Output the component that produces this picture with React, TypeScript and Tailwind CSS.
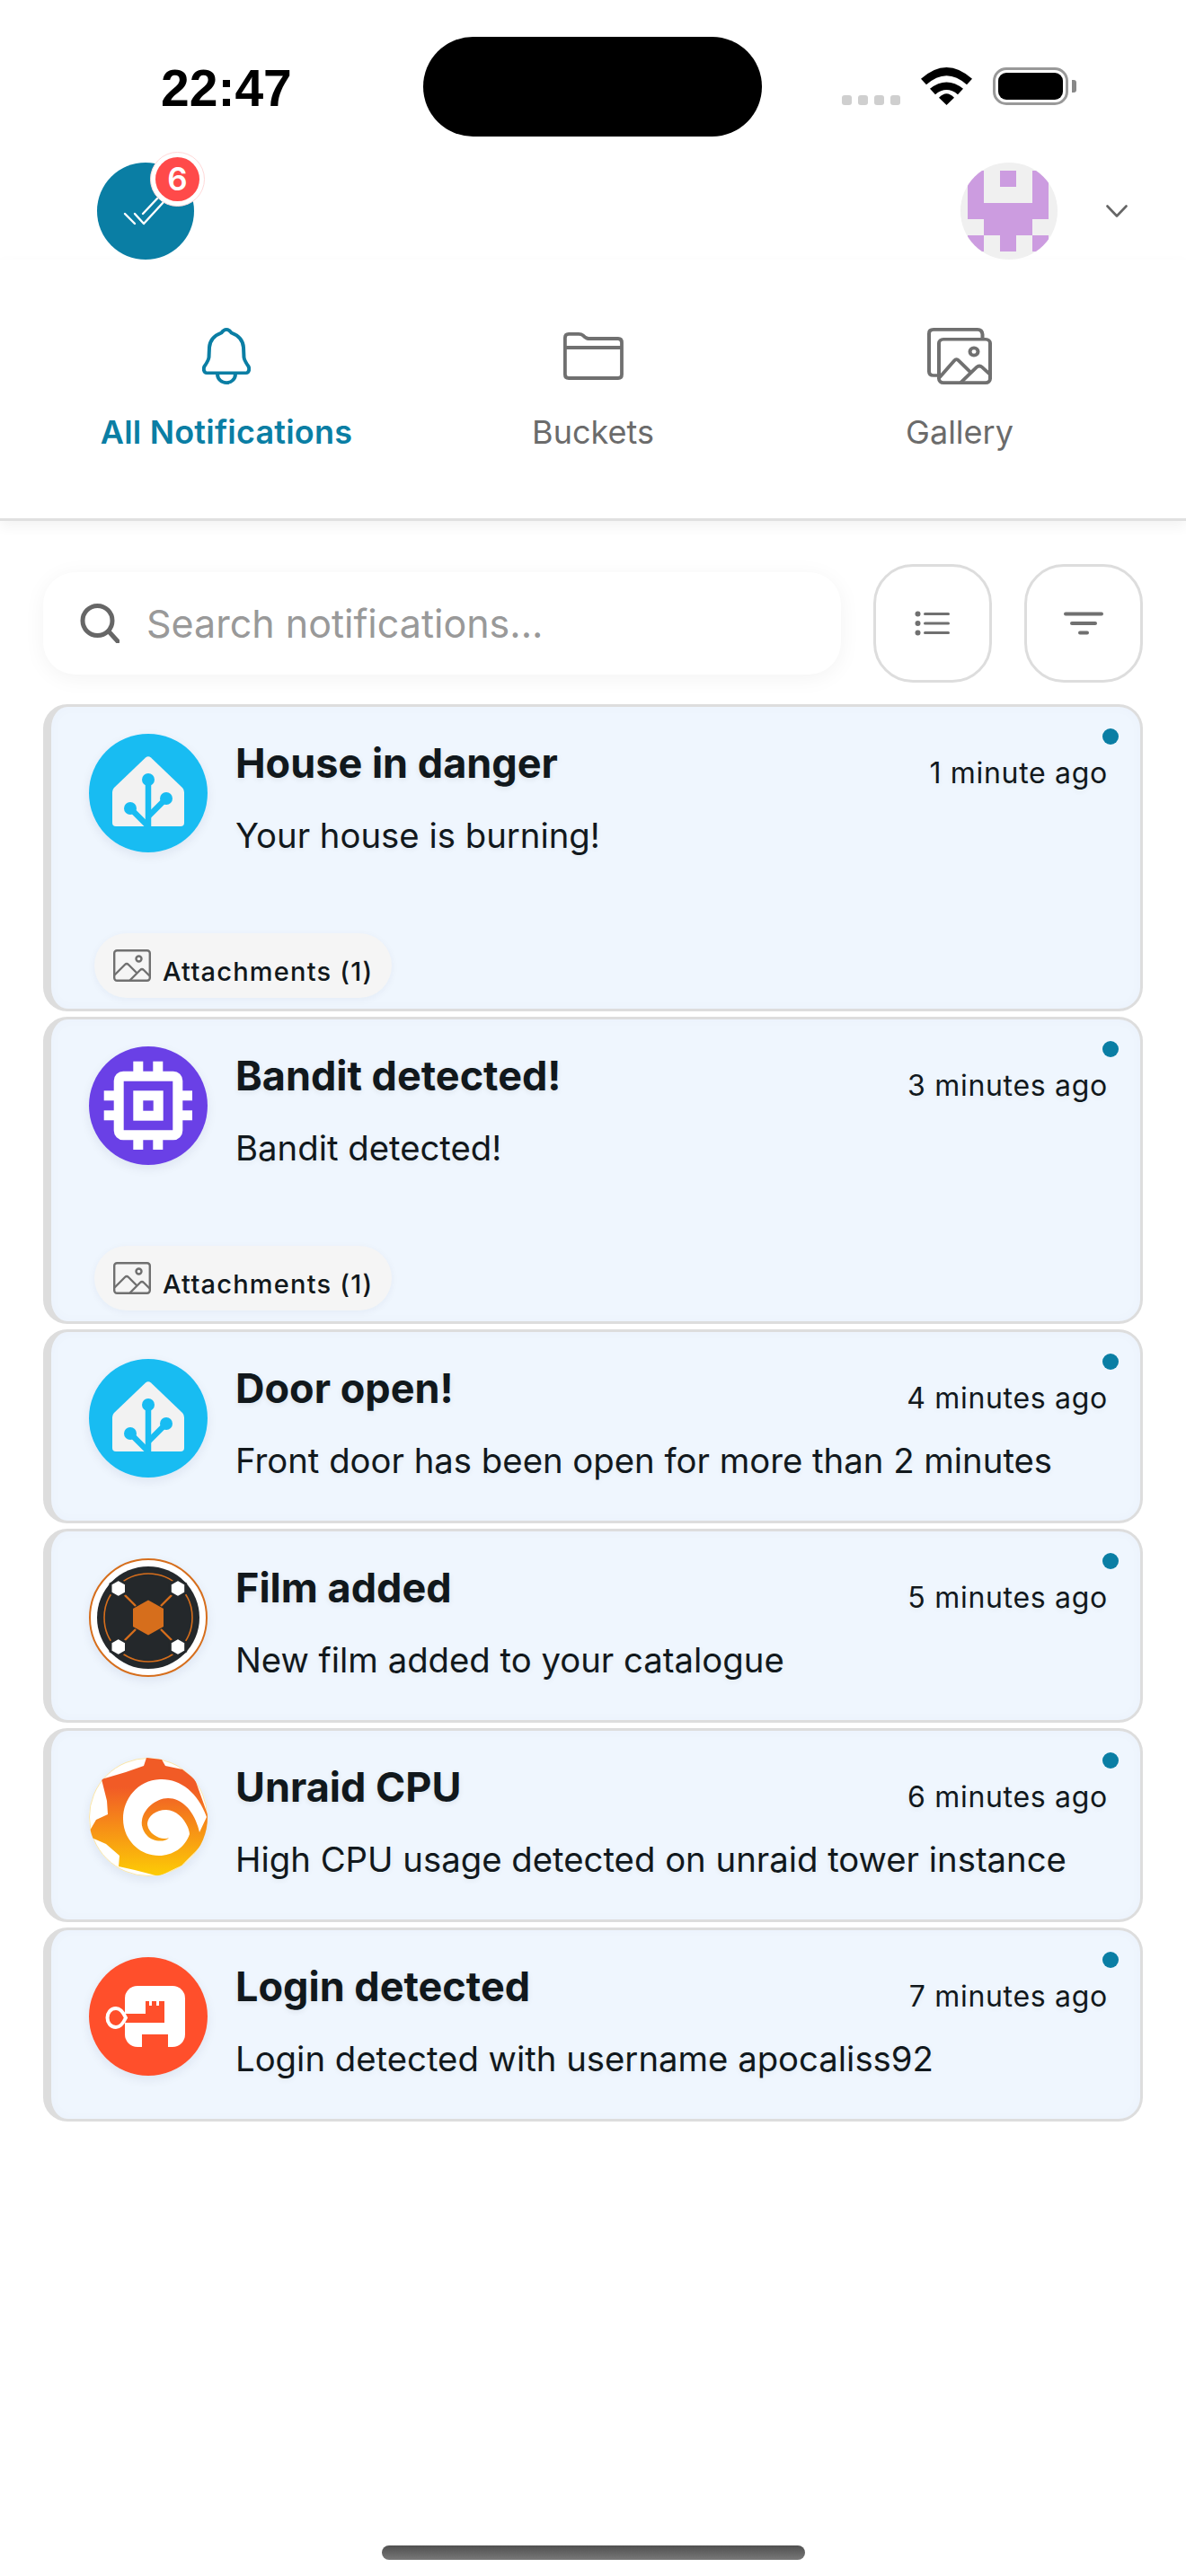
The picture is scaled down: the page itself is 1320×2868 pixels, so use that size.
const notifications = [
  { title: "House in danger", body: "Your house is burning!", time: "1 minute ago", icon: "home", attachments: true },
  { title: "Bandit detected!", body: "Bandit detected!", time: "3 minutes ago", icon: "chip", attachments: true },
  { title: "Door open!", body: "Front door has been open for more than 2 minutes", time: "4 minutes ago", icon: "home", attachments: false },
  { title: "Film added", body: "New film added to your catalogue", time: "5 minutes ago", icon: "film", attachments: false },
  { title: "Unraid CPU", body: "High CPU usage detected on unraid tower instance", time: "6 minutes ago", icon: "grafana", attachments: false },
  { title: "Login detected", body: "Login detected with username apocaliss92", time: "7 minutes ago", icon: "key", attachments: false },
];

const avatarCells = [
  [1, 0, 1, 0, 1],
  [1, 0, 0, 0, 1],
  [1, 1, 1, 1, 1],
  [0, 1, 1, 1, 0],
  [1, 0, 1, 0, 1],
];

const WifiIcon = () => (
  <svg width="57" height="42" viewBox="0 0 57 46" preserveAspectRatio="none" fill="#000">
    <path d="M0 14 Q28.5 -14 57 14 L51 21 Q28.5 -1 6 21 Z" />
    <path d="M10 26 Q28.5 10 47 26 L41 33 Q28.5 22 16 33 Z" />
    <path d="M20 37 Q28.5 27 37 37 L28.5 46 Z" />
  </svg>
);

const LogoCheck = () => (
  <svg width="108" height="108" viewBox="0 0 108 108" fill="none" stroke="#fff" strokeWidth="2.4" strokeLinecap="round" strokeLinejoin="round">
    <path d="M31 57 L42 68" />
    <path d="M42 57 L52 68 L74 44" />
    <path d="M51 57 L67 40" />
  </svg>
);

const BellIcon = () => (
  <svg width="54" height="63" viewBox="0 0 54 69" preserveAspectRatio="none" fill="none" stroke="#0a7ea4" strokeWidth="4" strokeLinecap="round" strokeLinejoin="round">
    <path d="M27 2 C24.5 2 23 3.5 21.5 6 C13 9.5 8.5 15 8 24 L7.5 36 C7 40 5 43 2.5 47 C1 50 2 55 5 55 L49 55 C52 55 53 50 51.5 47 C49 43 47 40 46.5 36 L46 24 C45.5 15 41 9.5 32.5 6 C31 3.5 29.5 2 27 2 Z" />
    <path d="M17 56 C17 63 22 67 27 67 C32 67 37 63 37 56" />
  </svg>
);

const FolderIcon = () => (
  <svg width="67" height="53" viewBox="0 0 67 53" fill="none" stroke="#707070" strokeWidth="3.8" strokeLinejoin="round">
    <path d="M1.9 6 Q1.9 1.9 6 1.9 L17 1.9 Q20 1.9 22 3.5 Q25 7 28 7 L61 7 Q65 7 65 11.5 L65 47 Q65 51 61 51 L6 51 Q1.9 51 1.9 47 Z" />
    <path d="M1.9 17 L65 17" />
  </svg>
);

const GalleryIcon = () => (
  <svg width="72" height="63" viewBox="0 0 72 69" preserveAspectRatio="none" fill="none" stroke="#707070" strokeWidth="4" strokeLinecap="round" strokeLinejoin="round">
    <path d="M12 58 L7 58 Q2 58 2 53 L2 7 Q2 2 7 2 L56 2 Q61 2 61.5 8 L61.5 13" />
    <rect x="13" y="14" width="57" height="53" rx="5" />
    <circle cx="52" cy="29" r="4.5" />
    <path d="M14 60 L30 40 Q32.5 37 35 40 L48 54" />
    <path d="M38 66 L55 48 Q58 45 61 48 L70 57" />
  </svg>
);

const SearchIcon = () => (
  <svg width="44" height="44" viewBox="0 0 44 44" fill="none" stroke="#666" strokeWidth="5" strokeLinecap="round">
    <circle cx="19.5" cy="19" r="16.5" />
    <path d="M32 31 L42 42" />
  </svg>
);

const ListIcon = () => (
  <svg width="40" height="28" viewBox="0 0 40 28" fill="#707070">
    <circle cx="3.5" cy="3.5" r="3" />
    <circle cx="3.5" cy="14" r="3" />
    <circle cx="3.5" cy="24.5" r="3" />
    <rect x="10" y="2" width="29" height="3" rx="1.5" />
    <rect x="10" y="12.5" width="29" height="3" rx="1.5" />
    <rect x="10" y="23" width="29" height="3" rx="1.5" />
  </svg>
);

const FilterIcon = () => (
  <svg width="44" height="28" viewBox="0 0 44 28" fill="#707070">
    <rect x="0" y="1.5" width="44" height="4" rx="2" />
    <rect x="7" y="12" width="30" height="4" rx="2" />
    <rect x="16" y="22.5" width="12" height="4" rx="2" />
  </svg>
);

const PictureIcon = () => (
  <svg width="42" height="36" viewBox="0 0 42 36" fill="none" stroke="#707070" strokeWidth="2.4" strokeLinecap="round" strokeLinejoin="round">
    <rect x="1.2" y="1.2" width="39.6" height="33.6" rx="3" />
    <circle cx="28.5" cy="10.5" r="3" />
    <path d="M2 28 L13 17 Q15 15 17 17 L26 26" />
    <path d="M19 34 L30 23 Q32 21 34 23 L40 29" />
  </svg>
);

const HomeAvatar = () => (
  <svg width="132" height="132" viewBox="0 0 132 132">
    <circle cx="66" cy="66" r="66" fill="#18bcf2" />
    <path d="M63 26.5 Q66 24 69 26.5 L104 60 Q106 62 106 65 L106 99 Q106 103 102 103 L30 103 Q26 103 26 99 L26 65 Q26 62 28 60 Z" fill="#f2f2f2" />
    <g stroke="#18bcf2" strokeWidth="6.5" fill="none">
      <path d="M66 51 L66 104" />
      <path d="M86 72 L66 92" />
      <path d="M46 83 L66 103" />
    </g>
    <g fill="#18bcf2">
      <circle cx="66" cy="51" r="7" />
      <circle cx="86" cy="72" r="7" />
      <circle cx="46" cy="83" r="7" />
    </g>
  </svg>
);

const ChipAvatar = () => (
  <svg width="132" height="132" viewBox="0 0 132 132">
    <circle cx="66" cy="66" r="66" fill="#6a40e6" />
    <rect x="33.2" y="33.2" width="65.6" height="65.6" rx="5" fill="none" stroke="#fff" strokeWidth="11" />
    <rect x="54.8" y="54.8" width="22.4" height="22.4" fill="none" stroke="#fff" strokeWidth="11" />
    <g fill="#fff">
      <rect x="49.3" y="16.7" width="11" height="12" />
      <rect x="71.3" y="16.7" width="11" height="12" />
      <rect x="49.3" y="103" width="11" height="12" />
      <rect x="71.3" y="103" width="11" height="12" />
      <rect x="16.7" y="49.3" width="12" height="11" />
      <rect x="16.7" y="71.3" width="12" height="11" />
      <rect x="103" y="49.3" width="12" height="11" />
      <rect x="103" y="71.3" width="12" height="11" />
    </g>
  </svg>
);

const FilmAvatar = () => (
  <svg width="132" height="132" viewBox="0 0 132 132">
    <circle cx="66" cy="66" r="65" fill="#fff" stroke="#d66e1c" strokeWidth="2" />
    <circle cx="66" cy="66" r="57" fill="#24282b" />
    <circle cx="66" cy="66" r="49" fill="none" stroke="#d66e1c" strokeWidth="1.6" />
    <g stroke="#d66e1c" strokeWidth="2.4">
      <path d="M39 40 L52 53" />
      <path d="M93 40 L80 53" />
      <path d="M39 92 L52 79" />
      <path d="M93 92 L80 79" />
    </g>
    <path d="M66 46.5 L83 56 L83 76 L66 85.5 L49 76 L49 56 Z" fill="#d66e1c" />
    <g fill="#fff" stroke="#24282b" strokeWidth="3">
      <path d="M32.7 23.5 L41.5 28.5 L41.5 38.5 L32.7 43.5 L24 38.5 L24 28.5 Z" />
      <path d="M99 23.5 L107.7 28.5 L107.7 38.5 L99 43.5 L90.3 38.5 L90.3 28.5 Z" />
      <path d="M32.7 88.5 L41.5 93.5 L41.5 103.5 L32.7 108.5 L24 103.5 L24 93.5 Z" />
      <path d="M99 88.5 L107.7 93.5 L107.7 103.5 L99 108.5 L90.3 103.5 L90.3 93.5 Z" />
    </g>
  </svg>
);

const GrafanaAvatar = () => (
  <svg width="132" height="132" viewBox="0 0 132 132">
    <defs>
      <linearGradient id="grafana-fill" x1="0" y1="0.25" x2="0" y2="1">
        <stop offset="0" stopColor="#f15b26" />
        <stop offset="1" stopColor="#fdcd05" />
      </linearGradient>
      <clipPath id="grafana-clip">
        <circle cx="66" cy="66" r="66" />
      </clipPath>
    </defs>
    <circle cx="66" cy="66" r="65.5" fill="#fff" stroke="#fbe6a8" strokeWidth="1" />
    <g clipPath="url(#grafana-clip)">
      <path
        d="M64 0 L81 2 L85 9 L104 13 L118 24 L132 63 L132 89 L118 105 L103 120 L78 132 L51 125 L33 121 L34 109 L19 96 L3 89 L1 81 L8 69 L21 63 L20 48 L14 24 L41 16 L61 9 Z"
        fill="url(#grafana-fill)"
      />
      <path
        d="M131 66 C121 38 101 23 79 24 C54 25 38 46 38 68 C38 91 56 109 78 109 C93 109 107 100 112 85 C111 74 100 58 86 58 C74 58 66 65 65 73 C65 83 76 90 84 90 C86 90 87 90 89 89 C84 95 70 93 65 87 C60 82 58 75 59 70 C60 58 74 45 88 45 C104 45 118 60 123 83 L131 66 Z"
        fill="#fff"
      />
    </g>
  </svg>
);

const KeyAvatar = () => (
  <svg width="132" height="132" viewBox="0 0 132 132">
    <circle cx="66" cy="66" r="66" fill="#ff4f2b" />
    <rect x="40" y="32" width="67" height="68" rx="14" fill="#fff" />
    <rect x="59" y="86" width="29" height="15" fill="#ff4f2b" />
    <rect x="38" y="63" width="46" height="10" fill="#ff4f2b" />
    <rect x="63" y="49" width="21" height="24" fill="#ff4f2b" />
    <rect x="67" y="49" width="3" height="5" fill="#fff" />
    <rect x="75" y="49" width="3" height="5" fill="#fff" />
    <path d="M30 57 C34 57 38 61 41 67.5 C38 74 34 78 30 78 C24 78 20.5 73 20.5 67.5 C20.5 62 24 57 30 57 Z" fill="#ff4f2b" stroke="#fff" strokeWidth="4" />
  </svg>
);

const NotificationAvatar = ({ icon }: { icon: string }) => {
  if (icon === "chip") return <ChipAvatar />;
  if (icon === "film") return <FilmAvatar />;
  if (icon === "grafana") return <GrafanaAvatar />;
  if (icon === "key") return <KeyAvatar />;
  return <HomeAvatar />;
};

const App = () => {
  return (
    <div className="relative w-[1320px] h-[2868px] bg-white font-['Inter',sans-serif] text-[#11181c] overflow-hidden">
      {/* status bar */}
      <div className="flex items-start h-[181px] pt-[41px]">
        <div className="w-[471px] pl-[179px] pt-[25px] font-['Liberation_Sans',sans-serif] font-bold text-[57px] leading-[64px] text-black">
          22:47
        </div>
        <div className="w-[377px] h-[111px] rounded-full bg-black" />
        <div className="flex items-end pl-[89px] pt-[34px] h-[76px]">
          <div className="flex gap-[7px]">
            <div className="w-[11px] h-[11px] rounded-[3px] bg-[#cfcfcf]" />
            <div className="w-[11px] h-[11px] rounded-[3px] bg-[#cfcfcf]" />
            <div className="w-[11px] h-[11px] rounded-[3px] bg-[#cfcfcf]" />
            <div className="w-[11px] h-[11px] rounded-[3px] bg-[#cfcfcf]" />
          </div>
          <div className="ml-[23px] flex">
            <WifiIcon />
          </div>
          <div className="ml-[23px] flex items-center">
            <div className="w-[84px] h-[42px] rounded-[15px] border-[3px] border-[#999] p-[3px]">
              <div className="w-full h-full rounded-[9px] bg-black" />
            </div>
            <div className="ml-[4px] w-[5px] h-[14px] rounded-r-[3px] bg-[#888]" />
          </div>
        </div>
      </div>

      {/* top header */}
      <div className="flex items-center justify-between pl-[108px] pr-[66px] h-[108px]">
        <div className="relative w-[108px] h-[108px] rounded-full bg-[#0a7ea4]">
          <LogoCheck />
          <div className="absolute left-[59px] top-[-12px] w-[61px] h-[61px] rounded-full bg-white border border-[#ffd9d9] flex items-center justify-center">
            <div className="w-[49px] h-[49px] rounded-full bg-[#ff4a4a] flex items-center justify-center text-white text-[35px] font-semibold leading-none">
              6
            </div>
          </div>
        </div>
        <div className="flex items-center">
          <div className="w-[108px] h-[108px] rounded-full bg-[#f0f0f0] overflow-hidden pl-[8px] pt-[9px]">
            {avatarCells.map((row, r) => (
              <div className="flex" key={r}>
                {row.map((cell, c) => (
                  <div className={cell ? "w-[18px] h-[18px] bg-[#cc9ce0]" : "w-[18px] h-[18px]"} key={c} />
                ))}
              </div>
            ))}
          </div>
          <svg className="ml-[54px] mr-[-1px]" width="24" height="14" viewBox="0 0 24 14" fill="none" stroke="#666" strokeWidth="2.6" strokeLinecap="round" strokeLinejoin="round">
            <path d="M1.5 1.5 L12 12.5 L22.5 1.5" />
          </svg>
        </div>
      </div>

      {/* tabs */}
      <div className="grid grid-cols-3 px-[48px] pt-[76px] h-[291px] border-b-[3px] border-[#e0e0e0] shadow-[0_6px_14px_rgba(0,0,0,0.05)]">
        <div className="flex flex-col items-center">
          <div className="h-[63px] flex items-center">
            <BellIcon />
          </div>
          <div className="mt-[29px] text-[#0a7ea4] text-[36px] leading-[48px] font-semibold tracking-[0.2px]">All Notifications</div>
        </div>
        <div className="flex flex-col items-center">
          <div className="h-[63px] flex items-center">
            <FolderIcon />
          </div>
          <div className="mt-[29px] text-[#6b6b6b] text-[36px] leading-[48px]">Buckets</div>
        </div>
        <div className="flex flex-col items-center">
          <div className="h-[63px] flex items-center">
            <GalleryIcon />
          </div>
          <div className="mt-[29px] text-[#6b6b6b] text-[36px] leading-[48px]">Gallery</div>
        </div>
      </div>

      {/* search row */}
      <div className="flex items-center gap-[36px] mx-[48px] mt-[48px] mb-[24px]">
        <div className="flex items-center w-[888px] h-[114px] rounded-[36px] bg-white pl-[41px] shadow-[0_4px_24px_rgba(0,0,0,0.05)]">
          <SearchIcon />
          <span className="ml-[30px] text-[43px] text-[#999]">Search notifications...</span>
        </div>
        <div className="w-[132px] h-[132px] rounded-[44px] border-[3px] border-[#dddddd] flex items-center justify-center">
          <ListIcon />
        </div>
        <div className="w-[132px] h-[132px] rounded-[44px] border-[3px] border-[#dddddd] flex items-center justify-center">
          <FilterIcon />
        </div>
      </div>

      {/* notification list */}
      <div className="flex flex-col gap-[6px] px-[48px]">
        {notifications.map((n) => (
          <div
            key={n.title}
            className={
              n.attachments
                ? "relative h-[342px] rounded-[27px] border-[3px] border-l-[9px] border-[#dddddd] bg-[#eff6fe] shadow-[inset_0_0_14px_rgba(0,60,120,0.025)]"
                : "relative h-[216px] rounded-[27px] border-[3px] border-l-[9px] border-[#dddddd] bg-[#eff6fe] shadow-[inset_0_0_14px_rgba(0,60,120,0.025)]"
            }
          >
            <div className="flex pl-[42px] pr-[36px] pt-[30px]">
              <div className="w-[132px] h-[132px] rounded-full shrink-0 shadow-[0_4px_12px_rgba(0,30,80,0.08)]">
                <NotificationAvatar icon={n.icon} />
              </div>
              <div className="flex-1 pl-[31px]">
                <div className="flex items-start justify-between">
                  <div className="mt-[2px] font-bold text-[45px] leading-[62px] [text-shadow:0_2px_6px_rgba(0,0,0,0.08)]">{n.title}</div>
                  <div className="text-[32px] leading-[44px] mt-[22px] tracking-[0.7px] [text-shadow:0_2px_6px_rgba(0,0,0,0.06)]">{n.time}</div>
                </div>
                <div className="mt-[20px] text-[38.3px] leading-[54px] [text-shadow:0_2px_6px_rgba(0,0,0,0.06)]">{n.body}</div>
              </div>
            </div>
            <div className="absolute right-[24px] top-[24px] w-[18px] h-[18px] rounded-full bg-[#0a7ea4]" />
            {n.attachments && (
              <div className="absolute left-[48px] top-[252px] flex items-center h-[72px] rounded-full bg-[#f5f5f5] pl-[21px] pr-[21px] shadow-[0_2px_8px_rgba(0,40,100,0.05)]">
                <PictureIcon />
                <span className="ml-[13px] mt-[13px] text-[29px] font-medium leading-none tracking-[1.2px]">Attachments (1)</span>
              </div>
            )}
          </div>
        ))}
      </div>

      {/* home indicator */}
      <div className="absolute left-[425px] top-[2834px] w-[471px] h-[16px] rounded-full bg-gradient-to-b from-[#505050] to-[#787878]" />
    </div>
  );
};

export default App;
